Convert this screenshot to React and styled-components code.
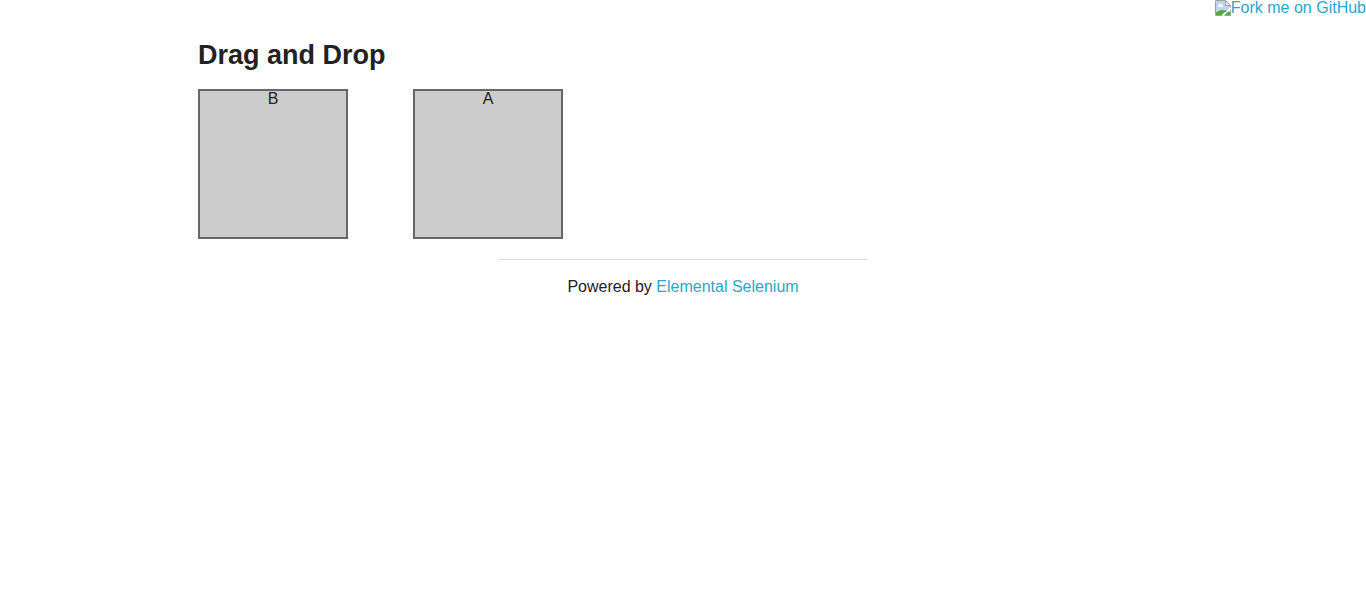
import React from "react";
import styled, { createGlobalStyle } from "styled-components";

const GlobalStyle = createGlobalStyle`
  *, *::before, *::after { box-sizing: border-box; }
  body {
    margin: 0;
    background: #fff;
    color: #222;
    font-family: "Liberation Sans", Arial, sans-serif;
    font-size: 16px;
    line-height: 16px;
  }
`;

const Link = styled.a`
  color: #2ba6cb;
  text-decoration: none;
  &:hover { color: #2795b6; }
`;

const ForkLink = styled(Link)`
  position: absolute;
  top: 0;
  right: 0;
  display: flex;
`;

const Content = styled.main`
  max-width: 1000px;
  margin: 0 auto;
  padding: 36px 15px 0;
`;

const Title = styled.h3`
  margin: 0 0 15px;
  font-size: 27px;
  line-height: 38px;
  font-weight: 700;
`;

const Columns = styled.div`
  display: flex;
  flex-wrap: wrap;
  gap: 65px;
`;

const Column = styled.div`
  width: 150px;
  height: 150px;
  border: 2px solid #666;
  background: #ccc;
  text-align: center;
  cursor: move;
`;

const Footer = styled.footer`
  max-width: 370px;
  margin: 20px auto 0;
  padding-top: 19px;
  border-top: 1px solid #ddd;
  text-align: center;
`;

const BrokenImage = () => (
  <svg width="16" height="16" viewBox="0 0 16 16" aria-hidden="true">
    <path d="M1 1h9l5 5v9H1z" fill="#c2d4f5" />
    <path d="M3 6a1.500 1.500 0 0 1 1.500-1.500A1.500 1.500 0 0 1 7 4.500 1.300 1.300 0 0 1 7 7H4a1 1 0 0 1-1-1z" fill="#fff" />
    <path d="M1 15v-2.500C3 11 5 10 7.500 10c3 0 5.500 1 7.500 2.500V15z" fill="#55a944" />
    <path d="M.5.5h10l5 5v10H.5z" fill="none" stroke="#a0a0a0" />
    <path d="M10.500.5v5h5z" fill="#eee" stroke="#a0a0a0" />
    <path d="M16 7v3l-3 1.500L10.500 14 9 16H6.500L8.500 13l3-1.500L13.500 9z" fill="#fff" />
  </svg>
);

export default function App() {
  return (
    <>
      <GlobalStyle />
      <ForkLink href="#fork">
        <BrokenImage />
        Fork me on GitHub
      </ForkLink>
      <Content>
        <Title>Drag and Drop</Title>
        <Columns>
          {["B", "A"].map((name) => (
            <Column key={name} draggable>{name}</Column>
          ))}
        </Columns>
      </Content>
      <Footer>
        Powered by <Link href="#elemental-selenium">Elemental Selenium</Link>
      </Footer>
    </>
  );
}
